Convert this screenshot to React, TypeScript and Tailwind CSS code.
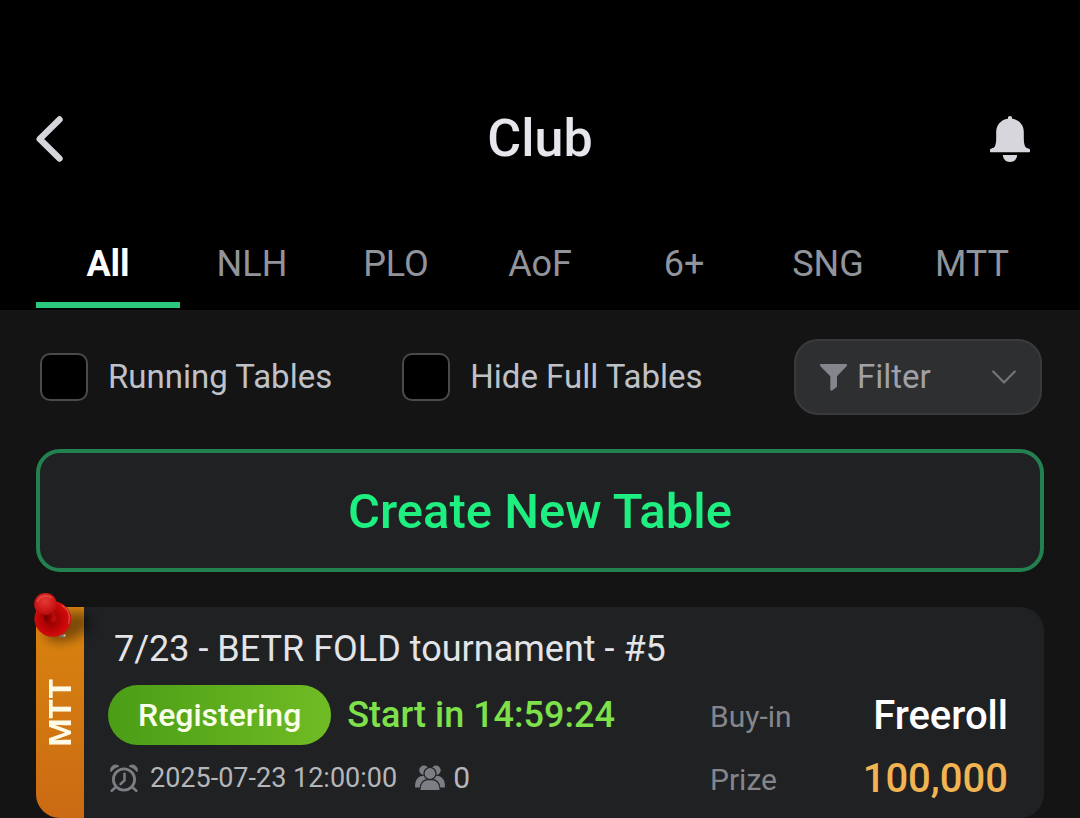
import { useState } from "react";

const TABS = ["All", "NLH", "PLO", "AoF", "6+", "SNG", "MTT"];

function BackIcon() {
  return (
    <svg width="28" height="46" viewBox="0 0 28 46" fill="none" aria-hidden="true">
      <path d="M23.500 3.500 3.700 23l19.800 19.500" stroke="#d6d5db" strokeWidth="6.400" strokeLinecap="round" strokeLinejoin="round" />
    </svg>
  );
}

function BellIcon() {
  return (
    <svg width="40" height="46" viewBox="0 0 40 46" fill="#d7d6dc" aria-hidden="true">
      <path d="M20 0c1.300 0 2.100.9 2.100 2.300v.5C29.500 3.800 33.800 9.500 33.800 16v6c0 5 .7 8 2.200 9.600 1.200 1.100 4 .9 4 2.400v1.200c0 .6-.4 1-1 1H1c-.6 0-1-.4-1-1V34c0-1.500 2.800-1.300 4-2.400C5.500 30 6.200 27 6.200 22v-6c0-6.500 4.300-12.200 11.700-13.200v-.5C17.900.9 18.700 0 20 0Z" />
      <path d="M12.900 39h14.200c0 4.200-3 7-7.100 7s-7.100-2.800-7.100-7Z" />
    </svg>
  );
}

function FunnelIcon() {
  return (
    <svg width="27" height="27" viewBox="0 0 27 27" fill="#84858d" aria-hidden="true">
      <path d="M1 0h25c1 0 1.300 1.400.6 2.200L17 12.300v9.900c0 .4-.2.800-.5 1l-4.400 3.200c-.8.600-1.800.1-1.800-.8V12.300L.4 2.200C-.3 1.400 0 0 1 0Z" />
    </svg>
  );
}

function ChevronDownIcon() {
  return (
    <svg width="24" height="14" viewBox="0 0 24 14" fill="none" aria-hidden="true">
      <path d="m1.200 1.500 10.800 11 10.800-11" stroke="#74757b" strokeWidth="2.200" strokeLinecap="round" strokeLinejoin="round" />
    </svg>
  );
}

function AlarmIcon() {
  return (
    <svg width="28" height="28" viewBox="0 0 28 28" fill="none" aria-hidden="true">
      <circle cx="14" cy="15.500" r="10.600" stroke="#7d7e83" strokeWidth="2.800" />
      <path d="M.9 7.800C-.3 3.900 2.400.9 5.500.9c1.500 0 2.700.5 3.500 1.300C5.700 3.300 3 5.200.9 7.800ZM27.100 7.800C28.300 3.900 25.600.9 22.500.9c-1.500 0-2.700.5-3.500 1.300 3.300 1.100 6 3 8.100 5.600Z" fill="#7d7e83" stroke="#7d7e83" strokeWidth=".800" strokeLinejoin="round" />
      <path d="M14.500 9.800v6.500l-4 3.900" stroke="#7d7e83" strokeWidth="2.500" strokeLinecap="round" strokeLinejoin="round" />
      <path d="m5 23.800-3.300 2.900M23 23.800l3.300 2.900" stroke="#7d7e83" strokeWidth="2.600" strokeLinecap="round" />
    </svg>
  );
}

function PlayersIcon() {
  return (
    <svg width="30" height="26" viewBox="0 0 30 26" aria-hidden="true">
      <g fill="#7d7e83">
        <circle cx="9" cy="5.200" r="4.700" />
        <circle cx="21" cy="5.200" r="4.700" />
        <path d="M0 21.700C0 15 3 10.800 8.500 10.800h13c5.500 0 8.500 4.200 8.500 10.900 0 .5-.3.800-.8.800H.8c-.5 0-.8-.3-.8-.8Z" />
      </g>
      <g fill="#7d7e83" stroke="#202123" strokeWidth="1.200">
        <circle cx="15" cy="8.500" r="6" />
        <path d="M4.900 25.500v-.7c0-6.300 3.300-10.200 7.600-10.200h5c4.300 0 7.600 3.900 7.600 10.200v.7Z" />
      </g>
    </svg>
  );
}

function PinIcon() {
  return (
    <svg width="72" height="60" viewBox="0 0 72 60" aria-hidden="true">
      <defs>
        <radialGradient id="pinHead" cx="0.480" cy="0.350" r="0.650">
          <stop offset="0" stopColor="#e23a36" />
          <stop offset="0.500" stopColor="#d4201e" />
          <stop offset="0.850" stopColor="#c01010" />
          <stop offset="1" stopColor="#a00606" />
        </radialGradient>
        <radialGradient id="pinDisc" cx="0.450" cy="0.520" r="0.560">
          <stop offset="0" stopColor="#8a0202" />
          <stop offset="0.400" stopColor="#b00404" />
          <stop offset="0.750" stopColor="#cc0808" />
          <stop offset="0.930" stopColor="#d01212" />
          <stop offset="1" stopColor="#a80606" />
        </radialGradient>
        <linearGradient id="pinStem" x1="0" y1="0" x2="1" y2="0.150">
          <stop offset="0" stopColor="#a50404" />
          <stop offset="0.400" stopColor="#6a0101" />
          <stop offset="0.700" stopColor="#a00505" />
          <stop offset="1" stopColor="#c40c0c" />
        </linearGradient>
        <filter id="pinShade" x="-60%" y="-60%" width="220%" height="220%">
          <feGaussianBlur stdDeviation="5.500" />
        </filter>
        <filter id="pinSoft" x="-30%" y="-30%" width="160%" height="160%">
          <feGaussianBlur stdDeviation="1.200" />
        </filter>
      </defs>
      <ellipse cx="34" cy="34" rx="24" ry="13" transform="rotate(-22 34 34)" fill="#000" opacity="0.420" filter="url(#pinShade)" />
      <path d="m25.500 42 3.500 1.500" stroke="#77706a" strokeWidth="2.600" strokeLinecap="round" />
      <circle cx="30.500" cy="42.500" r="1.100" fill="#d8d8d8" />
      <ellipse cx="18.800" cy="26" rx="18.400" ry="17.800" fill="url(#pinDisc)" />
      <path d="M28 12.500c7 4 8.800 11 6.800 17.500" stroke="#f2645c" strokeWidth="1.500" fill="none" strokeLinecap="round" opacity="0.600" />
      <path d="M6 18c3 3 4 7 5.500 10 2.500 3.500 9.500 2.500 11.500-2-2-3-2.500-7-1.500-12Z" fill="url(#pinStem)" filter="url(#pinSoft)" />
      <ellipse cx="11.500" cy="11.300" rx="11.300" ry="11.300" fill="url(#pinHead)" />
      <path d="M3.500 8.500C5.500 3 12 1.500 17 4.500" stroke="#f47a72" strokeWidth="1.600" fill="none" strokeLinecap="round" opacity="0.450" />
    </svg>
  );
}

function CheckOption({ id, label }: { id: string; label: string }) {
  return (
    <div className="flex items-center gap-5">
      <input
        id={id}
        type="checkbox"
        className="size-12 shrink-0 appearance-none rounded-[10px] border-2 border-[#4a4a4e] bg-black checked:bg-[#2bc77d]"
      />
      <label htmlFor={id} className="text-[33px] leading-10 text-[#bfc1c8]">
        {label}
      </label>
    </div>
  );
}

function TournamentCard() {
  return (
    <article className="relative flex rounded-3xl rounded-tl-none bg-[#202123]">
      <div className="flex w-12 shrink-0 items-center justify-center rounded-bl-3xl bg-linear-to-b from-[#d9850f] to-[#cb6a13]">
        <span className="rotate-180 text-[32px] leading-10 font-bold text-[#fffbe6] [writing-mode:vertical-rl]">MTT</span>
      </div>
      <span className="absolute -top-[14px] -left-[2px]">
        <PinIcon />
      </span>
      <div className="flex-1 pt-[22px] pr-9 pb-[7px] pl-6">
        <h2 className="px-[6px] text-[36px] leading-10 text-[#e3e4e8]">7/23 - BETR FOLD tournament - #5</h2>
        <div className="mt-4 flex justify-between">
          <div>
            <div className="flex items-center gap-4">
              <span className="rounded-full bg-linear-to-r from-[#4a9d16] to-[#70bc24] px-[30px] py-[10px] text-[32px] leading-10 font-medium text-[#faffe9]">
                Registering
              </span>
              <span className="text-[36px] leading-10 font-medium text-[#7ee04a]">Start in 14:59:24</span>
            </div>
            <div className="mt-[15px] flex items-center pl-[2px] text-[27px] leading-9 text-[#b5b6ba]">
              <AlarmIcon />
              <time className="ml-3">2025-07-23 12:00:00</time>
              <span className="ml-[18px] flex items-center gap-2">
                <PlayersIcon />
                <span className="text-[30px]">0</span>
              </span>
            </div>
          </div>
          <dl className="grid w-[298px] grid-cols-[auto_1fr] grid-rows-[62px_64px] items-center text-[#85868b]">
            <dt className="text-[30px]">Buy-in</dt>
            <dd className="text-right text-[40px] font-medium text-white">Freeroll</dd>
            <dt className="text-[30px]">Prize</dt>
            <dd className="text-right text-[40px] font-medium text-[#f0b452]">100,000</dd>
          </dl>
        </div>
      </div>
    </article>
  );
}

export default function App() {
  const [active, setActive] = useState("All");

  return (
    <div className="min-h-screen bg-[#141414] font-['Roboto',sans-serif]">
      <header className="bg-black px-9 pt-[109px] pb-[2px]">
        <div className="grid grid-cols-[1fr_auto_1fr] items-center">
          <button type="button" aria-label="Back" className="justify-self-start">
            <BackIcon />
          </button>
          <h1 className="text-[52px] leading-[60px] font-medium text-[#e6e7ec]">Club</h1>
          <button type="button" aria-label="Notifications" className="mr-[14px] justify-self-end">
            <BellIcon />
          </button>
        </div>
        <nav className="mt-[57px] grid grid-cols-7">
          {TABS.map((tab) => (
            <button
              key={tab}
              type="button"
              onClick={() => setActive(tab)}
              className={
                tab === active
                  ? "border-b-[6px] border-[#2bc77d] py-[18px] text-[36px] leading-10 font-bold text-white"
                  : "border-b-[6px] border-transparent py-[18px] text-[36px] leading-10 text-[#91949b]"
              }
            >
              {tab}
            </button>
          ))}
        </nav>
      </header>

      <main className="px-9 pt-[29px]">
        <div className="flex items-center justify-between pr-[2px] pl-1">
          <div className="flex items-center gap-[70px]">
            <CheckOption id="running" label="Running Tables" />
            <CheckOption id="hide-full" label="Hide Full Tables" />
          </div>
          <button
            type="button"
            aria-haspopup="menu"
            className="flex w-[248px] items-center rounded-3xl border-2 border-[#3a3a3e] bg-[#2e2f31] px-6 py-4 text-[33px] leading-10 text-[#a0a1a8]"
          >
            <FunnelIcon />
            <span className="mr-auto ml-[10px]">Filter</span>
            <ChevronDownIcon />
          </button>
        </div>

        <button
          type="button"
          className="mt-[34px] w-full rounded-3xl border-4 border-[#23804f] bg-[#202123] pt-[30px] pb-7 text-[49px] leading-[57px] font-medium text-[#1fee80]"
        >
          Create New Table
        </button>

        <section className="mt-[35px]">
          <TournamentCard />
        </section>
      </main>
    </div>
  );
}
